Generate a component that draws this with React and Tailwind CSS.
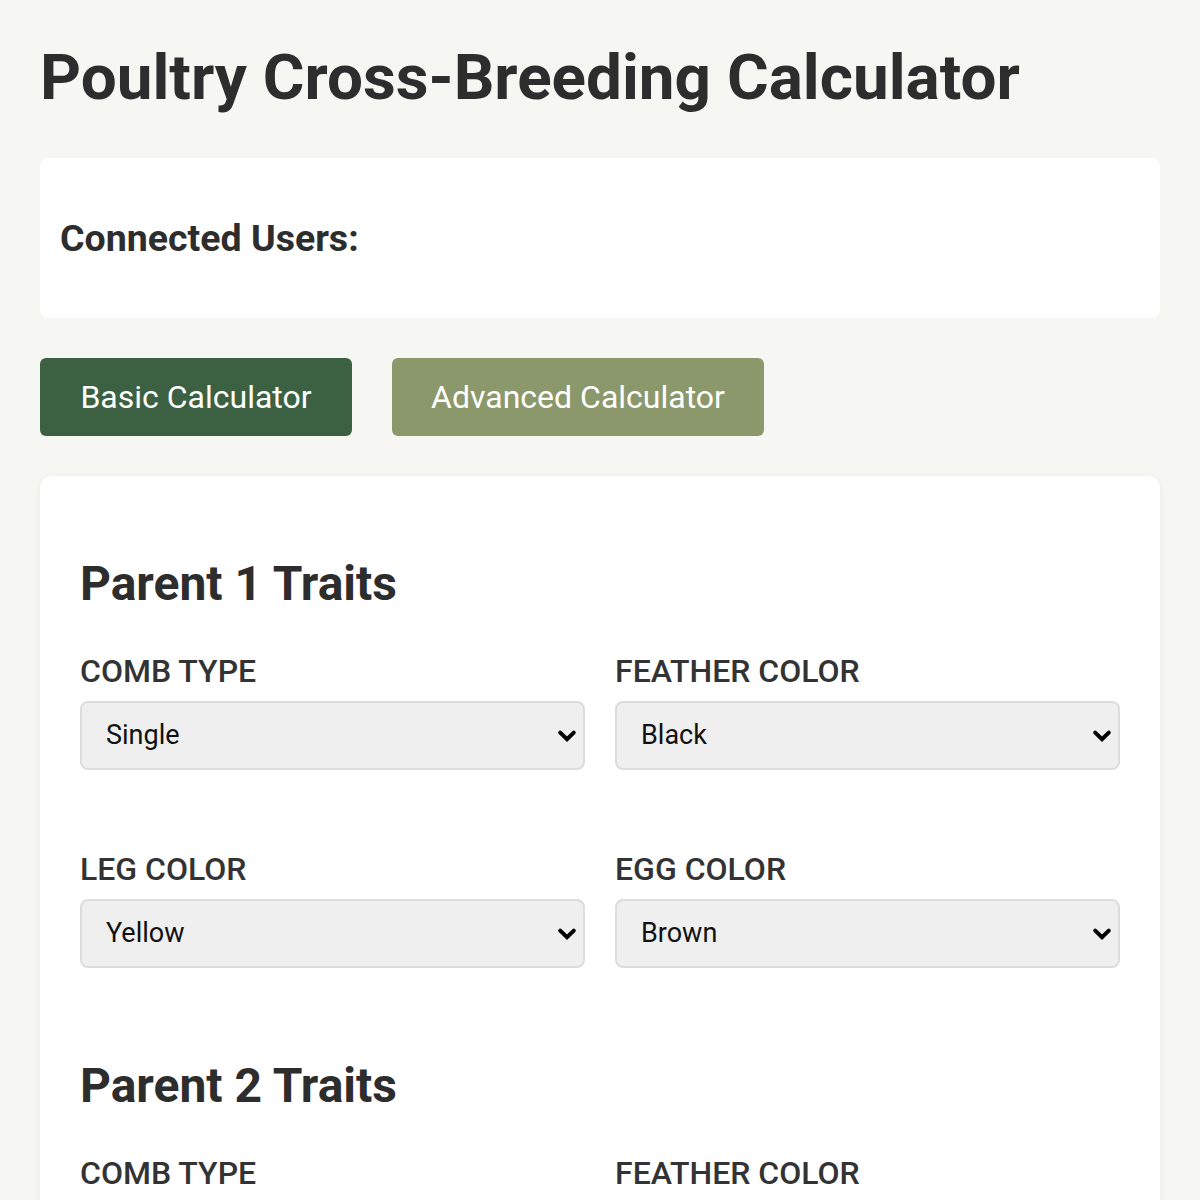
import { useState } from "react";

const traits = [
    { label: "Comb Type", options: ["Single", "Rose", "Pea", "Walnut"] },
    { label: "Feather Color", options: ["Black", "White", "Red", "Blue"] },
    { label: "Leg Color", options: ["Yellow", "White", "Slate", "Green"] },
    { label: "Egg Color", options: ["Brown", "White", "Blue", "Green"] },
];

function TraitField({ label, options }) {
    return (
        <div className="flex flex-col">
            <label className="text-[32px] leading-[38px] font-medium uppercase text-[#333] mb-[11px]">
                {label}
            </label>
            <div className="relative">
                <select className="h-[69px] w-full appearance-none rounded-[8px] border-2 border-[#ddd] bg-[#efefef] pl-[24px] pr-12 text-[27px] text-[#111] outline-none">
                    {options.map((o) => (
                        <option key={o}>{o}</option>
                    ))}
                </select>
                <svg
                    className="pointer-events-none absolute right-[8px] top-1/2 -translate-y-1/2"
                    width="20"
                    height="14"
                    viewBox="0 0 20 14"
                    fill="none"
                >
                    <path d="M3.2 3.6 L10 10.2 L16.8 3.6" stroke="#000" strokeWidth="4" strokeLinecap="round" strokeLinejoin="miter" />
                </svg>
            </div>
        </div>
    );
}

function ParentSection({ title }) {
    return (
        <div className="mb-[90px]">
            <h2 className="text-[48px] leading-[56px] font-bold text-[#2d2d2d] mt-10 mb-10">
                {title}
            </h2>
            <div className="grid grid-cols-2 gap-x-[30px] gap-y-[80px]">
                {traits.map((t) => (
                    <TraitField key={t.label} {...t} />
                ))}
            </div>
        </div>
    );
}

export default function App() {
    const [mode, setMode] = useState("basic");

    return (
        <div className="min-h-screen bg-[#f6f6f2] px-10 pb-10 font-['Roboto',sans-serif] text-[#2d2d2d]">
            <h1 className="pt-[38px] text-[63.8px] leading-[80px] font-bold mb-[40px]">
                Poultry Cross-Breeding Calculator
            </h1>

            <div className="h-[160px] rounded-[8px] bg-white px-5 flex items-center">
                <h3 className="text-[37.5px] font-bold text-[#2d2d2d]">Connected Users:</h3>
            </div>

            <div className="flex gap-10 mt-10">
                <button
                    onClick={() => setMode("basic")}
                    className="h-[78px] w-[312px] rounded-[6px] bg-[#3b6142] text-[32px] text-white"
                >
                    Basic Calculator
                </button>
                <button
                    onClick={() => setMode("advanced")}
                    className="h-[78px] w-[372px] rounded-[6px] bg-[#8a986c] text-[32px] text-white"
                >
                    Advanced Calculator
                </button>
            </div>

            <div className="mt-10 rounded-[12px] bg-white p-10 shadow-[0_2px_8px_rgba(0,0,0,0.06)]">
                <ParentSection title="Parent 1 Traits" />
                <ParentSection title="Parent 2 Traits" />
            </div>
        </div>
    );
}
